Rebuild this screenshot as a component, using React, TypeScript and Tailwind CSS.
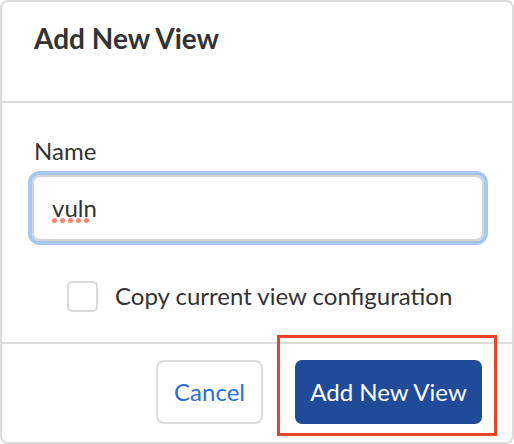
import React from "react";

export default function App() {
  return (
    <div className="w-[514px] h-[444px] bg-white relative" style={{ fontFamily: "Lato, 'Noto Sans', sans-serif" }}>
      <div className="w-[514px] h-[444px] border-2 border-[#dcdcdc] rounded-[8px] flex flex-col text-[#333333]">
        {/* Header */}
        <div className="h-[101px] shrink-0 pl-[32px] pt-[20px] border-b-2 border-[#dcdcdc]">
          <h2 className="text-[28px] leading-[1.2] font-bold text-[#333333]">Add New View</h2>
        </div>
        {/* Body */}
        <div className="shrink-0 pl-[30px] pr-[28px] pt-[34px] pb-[30px] border-b-2 border-[#dcdcdc]">
          <div className="text-[24px] leading-[28px] pl-[2px]">Name</div>
          <div className="mt-[10px] relative h-[66px] w-[452px] rounded-[8px] border-2 border-[#d4d4d4] shadow-[0_0_0_4px_#a4c8f2] flex items-center pl-[18px]">
            <span className="text-[24px] leading-[28px] text-[#333333] relative">
              vuln
              <span className="absolute left-[0px] top-[24px] flex gap-[3px]">
                <span className="w-[5px] h-[5px] rounded-full bg-[#f08676]" />
                <span className="w-[5px] h-[5px] rounded-full bg-[#f08676]" />
                <span className="w-[5px] h-[5px] rounded-full bg-[#f08676]" />
                <span className="w-[5px] h-[5px] rounded-full bg-[#f08676]" />
                <span className="w-[5px] h-[5px] rounded-full bg-[#f08676]" />
              </span>
            </span>
          </div>
          <div className="mt-[39px] flex items-center pl-[35px] h-[32px]">
            <div className="w-[31px] h-[31px] rounded-[5px] border-2 border-[#dadada] bg-white" />
            <span className="ml-[17px] text-[24px] leading-[28px] text-[#333333]">Copy current view configuration</span>
          </div>
        </div>
        {/* Footer */}
        <div className="flex-1 flex justify-end items-start pt-[16px] pr-[30px] gap-[32px]">
          <button className="h-[64px] w-[107px] rounded-[8px] border-2 border-[#dcdcdc] bg-white text-[24px] text-[#2d6fcf]">
            Cancel
          </button>
          <button className="h-[64px] w-[187px] rounded-[7px] bg-[#1f4b99] text-[24px] text-white">
            Add New View
          </button>
        </div>
      </div>
      <div className="absolute left-[277px] top-[335px] w-[220px] h-[101px] border-[3px] border-[#e8442a] pointer-events-none" />
    </div>
  );
}
